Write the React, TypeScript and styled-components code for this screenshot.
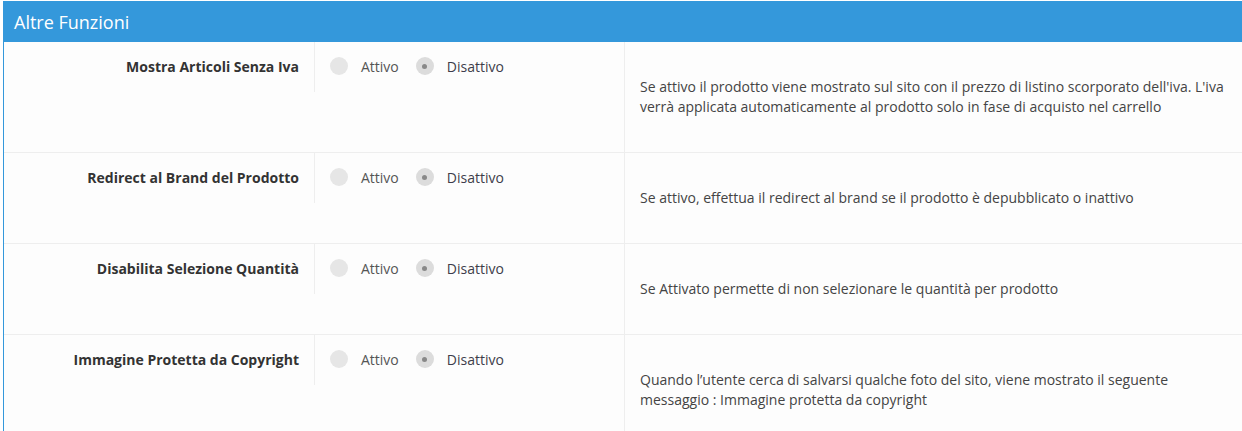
import React from 'react';
import styled, { createGlobalStyle } from 'styled-components';

const GlobalStyle = createGlobalStyle`
  html, body {
    margin: 0;
    padding: 0;
    overflow: hidden;
    background: #ffffff;
  }
  body {
    font-family: "Open Sans", "Noto Sans", sans-serif;
    color: #333;
  }
`;

interface Opzione {
  titolo: string;
  descrizione: string;
  attivo: boolean;
}

const opzioni: Opzione[] = [
  {
    titolo: 'Mostra Articoli Senza Iva',
    descrizione:
      "Se attivo il prodotto viene mostrato sul sito con il prezzo di listino scorporato dell'iva. L'iva verrà applicata automaticamente al prodotto solo in fase di acquisto nel carrello",
    attivo: false,
  },
  {
    titolo: 'Redirect al Brand del Prodotto',
    descrizione: 'Se attivo, effettua il redirect al brand se il prodotto è depubblicato o inattivo',
    attivo: false,
  },
  {
    titolo: 'Disabilita Selezione Quantità',
    descrizione: 'Se Attivato permette di non selezionare le quantità per prodotto',
    attivo: false,
  },
  {
    titolo: 'Immagine Protetta da Copyright',
    descrizione:
      'Quando l’utente cerca di salvarsi qualche foto del sito, viene mostrato il seguente messaggio : Immagine protetta da copyright',
    attivo: false,
  },
];

const Wrapper = styled.div`
  padding: 1px 0 0 3px;
`;

const Panel = styled.section`
  width: 1242px;
  border-left: 1px solid #3498db;
  background: #fdfdfd;
`;

const PanelHeading = styled.header`
  height: 41px;
  display: flex;
  align-items: center;
  padding: 0 11px;
  background: #3498db;
  color: #ffffff;
  font-size: 18px;
  margin-left: -1px;
`;

const Row = styled.div`
  display: grid;
  grid-template-columns: 311px 310px 1fr;
  border-bottom: 1px solid #eeeeee;
`;

const LabelCell = styled.div`
  align-self: start;
  padding: 15px 15px 15px 0;
  line-height: 20px;
  font-size: 14px;
  font-weight: 700;
  color: #333;
  text-align: right;
  border-right: 1px solid #eeeeee;
`;

const RadioCell = styled.div`
  display: flex;
  align-items: flex-start;
  gap: 17px;
  padding: 14px 15px 15px;
  border-right: 1px solid #eeeeee;
`;

const RadioOption = styled.label`
  display: flex;
  align-items: center;
  gap: 13px;
  height: 20px;
  font-size: 14px;
`;

const RadioDot = styled.span<{ $checked: boolean }>`
  width: 18px;
  height: 18px;
  border-radius: 50%;
  background: ${(p) => (p.$checked ? '#dcdcdc' : '#e6e6e6')};
  display: flex;
  align-items: center;
  justify-content: center;

  &::after {
    content: '';
    width: 5px;
    height: 5px;
    border-radius: 50%;
    background: ${(p) => (p.$checked ? '#888888' : 'transparent')};
  }
`;

const RadioText = styled.span<{ $checked: boolean }>`
  color: ${(p) => (p.$checked ? '#3d3d4a' : '#555555')};
`;

const DescrCell = styled.div`
  display: flex;
  align-items: center;
  padding: 35px 15px;
  max-width: 590px;
  font-size: 14px;
  line-height: 20px;
  color: #444;
`;

const App: React.FC = () => {
  return (
    <>
      <GlobalStyle />
      <Wrapper>
        <Panel>
          <PanelHeading>Altre Funzioni</PanelHeading>
          {opzioni.map((opzione, index) => (
            <Row key={index}>
              <LabelCell>{opzione.titolo}</LabelCell>
              <RadioCell>
                <RadioOption>
                  <RadioDot $checked={opzione.attivo} />
                  <RadioText $checked={opzione.attivo}>Attivo</RadioText>
                </RadioOption>
                <RadioOption>
                  <RadioDot $checked={!opzione.attivo} />
                  <RadioText $checked={!opzione.attivo}>Disattivo</RadioText>
                </RadioOption>
              </RadioCell>
              <DescrCell>{opzione.descrizione}</DescrCell>
            </Row>
          ))}
        </Panel>
      </Wrapper>
    </>
  );
};

export default App;
